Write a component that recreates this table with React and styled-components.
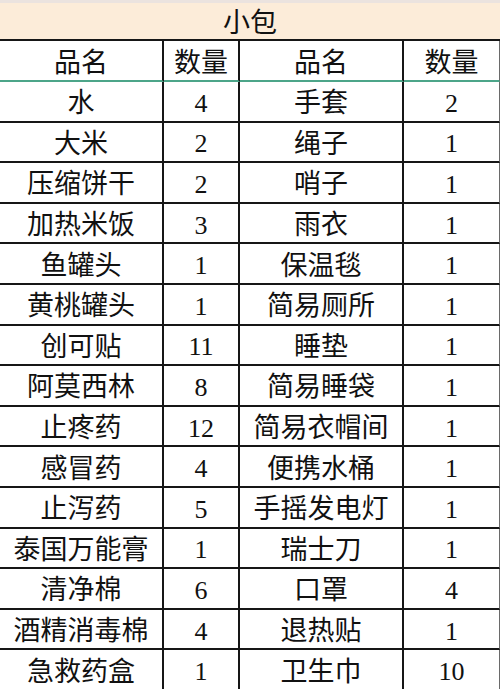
import React from 'react';
import styled, { createGlobalStyle } from 'styled-components';

const GlobalStyle = createGlobalStyle`
    html, body {
        margin: 0;
        padding: 0;
        background: #ffffff;
    }
    body {
        width: 500px;
        height: 689px;
        overflow: hidden;
    }
`;

const COLS = '164px 76px 164px 96px';
const LINE = '#161616';

const Sheet = styled.div`
    display: grid;
    grid-template-columns: ${COLS};
    width: 500px;
    font-family: "Liberation Serif", "Noto Sans CJK SC", serif;
    font-size: 27px;
    color: #111111;
    background: #ffffff;
`;

const Title = styled.div`
    grid-column: 1 / -1;
    box-sizing: border-box;
    height: 41px;
    border-top: 3px solid #ebe3df;
    border-bottom: 2px solid ${LINE};
    background: #fcecd9;
    display: flex;
    align-items: flex-end;
    justify-content: center;
    padding-bottom: 2px;
    line-height: 1;
`;

const Cell = styled.div`
    box-sizing: border-box;
    height: ${props => (props.isHead ? '41px' : '40.6px')};
    display: flex;
    align-items: center;
    justify-content: center;
    padding-top: 5px;
    line-height: 1;
    white-space: nowrap;
    border-bottom: 2px solid ${props => (props.isHead ? '#4ca589' : LINE)};
    border-right: ${props => (props.isLast ? '1px solid #6a6a6a' : `2px solid ${LINE}`)};
`;

const Num = styled.span`
    font-size: 26px;
`;

const HEAD = ['品名', '数量', '品名', '数量'];

const ROWS = [
    ['水', 4, '手套', 2],
    ['大米', 2, '绳子', 1],
    ['压缩饼干', 2, '哨子', 1],
    ['加热米饭', 3, '雨衣', 1],
    ['鱼罐头', 1, '保温毯', 1],
    ['黄桃罐头', 1, '简易厕所', 1],
    ['创可贴', 11, '睡垫', 1],
    ['阿莫西林', 8, '简易睡袋', 1],
    ['止疼药', 12, '简易衣帽间', 1],
    ['感冒药', 4, '便携水桶', 1],
    ['止泻药', 5, '手摇发电灯', 1],
    ['泰国万能膏', 1, '瑞士刀', 1],
    ['清净棉', 6, '口罩', 4],
    ['酒精消毒棉', 4, '退热贴', 1],
    ['急救药盒', 1, '卫生巾', 10],
];

const App = () => (
    <React.Fragment>
        <GlobalStyle />
        <Sheet>
            <Title>小包</Title>
            {HEAD.map((label, i) => (
                <Cell key={`h${i}`} isHead isLast={i === 3}>{label}</Cell>
            ))}
            {ROWS.map((row, r) => row.map((value, i) => (
                <Cell key={`${r}-${i}`} isLast={i === 3}>
                    {typeof value === 'number' ? <Num>{value}</Num> : value}
                </Cell>
            )))}
        </Sheet>
    </React.Fragment>
);

export default App;
